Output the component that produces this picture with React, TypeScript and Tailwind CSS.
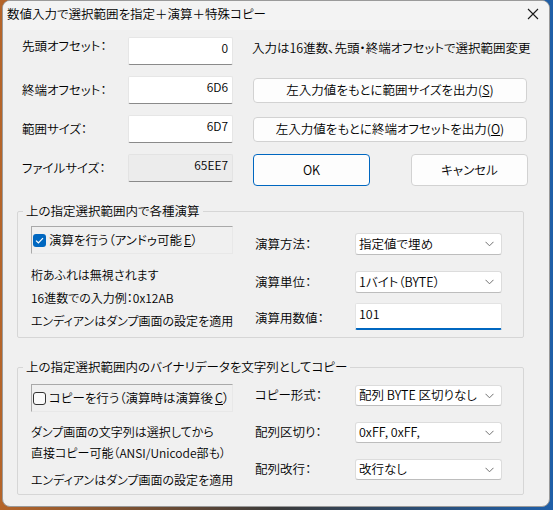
import React from "react";

const font = "font-['Noto_Sans_CJK_JP','Noto_Sans',sans-serif] [font-feature-settings:'palt'] font-[350]";

function Chevron() {
  return (
    <svg width="9" height="6" viewBox="0 0 9 6" className="shrink-0">
      <polyline points="0.5,0.8 4.5,4.8 8.5,0.8" fill="none" stroke="#707070" strokeWidth="1" />
    </svg>
  );
}

function Select({ value, h = 22 }: { value: string; h?: number }) {
  return (
    <div
      className="w-[147px] flex items-center justify-between bg-white border border-[#dcdcdc] border-b-[#bdbdbd] rounded-[3px] pl-[3px] pr-[7px] text-[12.5px] text-black"
      style={{ height: h }}
    >
      <span className="leading-none whitespace-nowrap">{value}</span>
      <Chevron />
    </div>
  );
}

function Field({ value, gray = false }: { value: string; gray?: boolean }) {
  return (
    <div
      className={
        "w-[105px] h-[28px] border border-b-[#8a8a8a] rounded-[2px] text-right pr-[4px] pt-[1px] text-[12px] leading-[18px] text-black " +
        (gray ? "bg-[#ececec] border-[#e3e3e3]" : "bg-white border-[#e6e6e6]")
      }
    >
      {value}
    </div>
  );
}

function Btn({ children, w, h = 25, primary = false }: { children: React.ReactNode; w: number; h?: number; primary?: boolean }) {
  return (
    <div
      className={
        "flex items-center justify-center rounded-[4px] text-[12.5px] text-black whitespace-nowrap " +
        (primary ? "bg-[#fdfdfd] border border-[#0067c0]" : "bg-[#fdfdfd] border border-[#d2d2d2]")
      }
      style={{ width: w, height: h }}
    >
      {children}
    </div>
  );
}

function Label({ children, w = 106 }: { children: React.ReactNode; w?: number }) {
  return (
    <div className="flex items-center text-[12.5px] text-black shrink-0 whitespace-nowrap" style={{ width: w }}>
      {children}
    </div>
  );
}

export default function App() {
  return (
    <div className={"w-[553px] h-[510px] bg-[linear-gradient(90deg,#b5652a_0%,#3a3a3a_50%,#1f5fa8_100%)] overflow-hidden " + font}>
      <div className="ml-[2px] w-[548px] h-[507px] rounded-[8px] border border-[#9a9a9a] bg-[#f0f0f0] overflow-hidden flex flex-col">
        {/* Title bar */}
        <div className="h-[29px] shrink-0 bg-[#f3f3f3] flex items-center justify-between pl-[4px] pr-[10px]">
          <span className="text-[12.5px] text-black leading-none mt-[-2px] whitespace-nowrap">数値入力で選択範囲を指定＋演算＋特殊コピー</span>
          <svg width="12" height="12" viewBox="0 0 12 12" className="mt-[-3px]">
            <path d="M1 1 L11 11 M11 1 L1 11" stroke="#1a1a1a" strokeWidth="1.1" />
          </svg>
        </div>

        {/* Body */}
        <div className="flex flex-col pt-[7px]">
          {/* top rows */}
          <div className="flex flex-col gap-[11px] pl-[19px]">
            <div className="flex items-start h-[28px]">
              <Label>先頭オフセット：</Label>
              <Field value="0" />
              <div className="ml-[19px] text-[12.5px] text-black leading-[18px] pt-[2px] whitespace-nowrap">
                入力は16進数、先頭・終端オフセットで選択範囲変更
              </div>
            </div>
            <div className="flex items-center h-[28px]">
              <Label>終端オフセット：</Label>
              <Field value="6D6" />
              <div className="ml-[20px]">
                <Btn w={274}>
                  左入力値をもとに範囲サイズを出力(<span className="underline">S</span>)
                </Btn>
              </div>
            </div>
            <div className="flex items-center h-[28px]">
              <Label>範囲サイズ：</Label>
              <Field value="6D7" />
              <div className="ml-[20px]">
                <Btn w={274}>
                  左入力値をもとに終端オフセットを出力(<span className="underline">O</span>)
                </Btn>
              </div>
            </div>
            <div className="flex items-start h-[32px]">
              <Label w={106}>
                <span className="h-[28px] flex items-center">ファイルサイズ：</span>
              </Label>
              <Field value="65EE7" gray />
              <div className="ml-[20px] flex gap-[41px]">
                <Btn w={117} h={32} primary>
                  OK
                </Btn>
                <Btn w={117} h={32}>
                  キャンセル
                </Btn>
              </div>
            </div>
          </div>

          {/* Group 1 */}
          <fieldset className="ml-[14px] mt-[16px] w-[507px] h-[136px] border border-[#d6d6d6] rounded-[2px]">
            <legend className="ml-[5px] px-[3px] text-[12.5px] leading-[18px] text-black whitespace-nowrap">上の指定選択範囲内で各種演算</legend>
            <div className="flex pl-[13px] mt-[6px]">
              <div className="w-[202px] flex flex-col">
                <div className="h-[28px] border border-[#a9a9a9] border-b-[#e8e8e8] border-r-[#e8e8e8] flex items-center pl-[1px] text-[12.5px] text-black whitespace-nowrap">
                  <span className="w-[13px] h-[13px] rounded-[3px] bg-[#0067c0] flex items-center justify-center mr-[3px]">
                    <svg width="9" height="7" viewBox="0 0 9 7">
                      <polyline points="1,3.6 3.4,5.8 8,1.2" fill="none" stroke="#fff" strokeWidth="1.2" />
                    </svg>
                  </span>
                  演算を行う（アンドゥ可能 <span className="underline ml-[2px]">E</span>）
                </div>
                <div className="mt-[9px] flex flex-col text-[12px] leading-[23px] text-black whitespace-nowrap">
                  <span>桁あふれは無視されます</span>
                  <span>16進数での入力例：0x12AB</span>
                  <span>エンディアンはダンプ画面の設定を適用</span>
                </div>
              </div>
              <div className="ml-[22px] flex flex-col pt-[7px]">
                <div className="flex items-center h-[22px]">
                  <Label w={100}>演算方法：</Label>
                  <Select value="指定値で埋め" />
                </div>
                <div className="flex items-center h-[22px] mt-[16px]">
                  <Label w={100}>演算単位：</Label>
                  <Select value="1バイト（BYTE）" />
                </div>
                <div className="flex items-center h-[27px] mt-[10px]">
                  <Label w={100}>
                    <span className="mt-[3px]">演算用数値：</span>
                  </Label>
                  <div className="w-[147px] h-[27px] bg-white border border-[#e3e3e3] border-b-2 border-b-[#0067c0] rounded-[2px] pl-[3px] pt-[1px] text-[12.5px] leading-[18px] text-black">
                    101
                  </div>
                </div>
              </div>
            </div>
          </fieldset>

          {/* Group 2 */}
          <fieldset className="ml-[14px] mt-[20px] w-[507px] h-[137px] border border-[#d6d6d6] rounded-[2px]">
            <legend className="ml-[5px] px-[3px] text-[12.5px] leading-[18px] text-black whitespace-nowrap">
              上の指定選択範囲内のバイナリデータを文字列としてコピー
            </legend>
            <div className="flex pl-[13px] mt-[8px]">
              <div className="w-[202px] flex flex-col">
                <div className="h-[28px] border border-[#a9a9a9] border-b-[#e8e8e8] border-r-[#e8e8e8] flex items-center pl-[1px] text-[12.5px] text-black whitespace-nowrap">
                  <span className="w-[13px] h-[13px] rounded-[3px] border border-[#333] bg-[#fafafa] mr-[3px]" />
                  コピーを行う（演算時は演算後 <span className="underline ml-[2px]">C</span>）
                </div>
                <div className="mt-[9px] flex flex-col text-[12px] leading-[21px] text-black whitespace-nowrap">
                  <span>ダンプ画面の文字列は選択してから</span>
                  <span>直接コピー可能（ANSI/Unicode部も）</span>
                  <span className="mt-[6px]">エンディアンはダンプ画面の設定を適用</span>
                </div>
              </div>
              <div className="ml-[22px] flex flex-col pt-[1px]">
                <div className="flex items-center h-[21px]">
                  <Label w={100}>コピー形式：</Label>
                  <Select value="配列 BYTE 区切りなし" h={21} />
                </div>
                <div className="flex items-center h-[21px] mt-[16px]">
                  <Label w={100}>配列区切り：</Label>
                  <Select value="0xFF, 0xFF," h={21} />
                </div>
                <div className="flex items-center h-[21px] mt-[16px]">
                  <Label w={100}>配列改行：</Label>
                  <Select value="改行なし" h={21} />
                </div>
              </div>
            </div>
          </fieldset>
        </div>
      </div>
    </div>
  );
}
